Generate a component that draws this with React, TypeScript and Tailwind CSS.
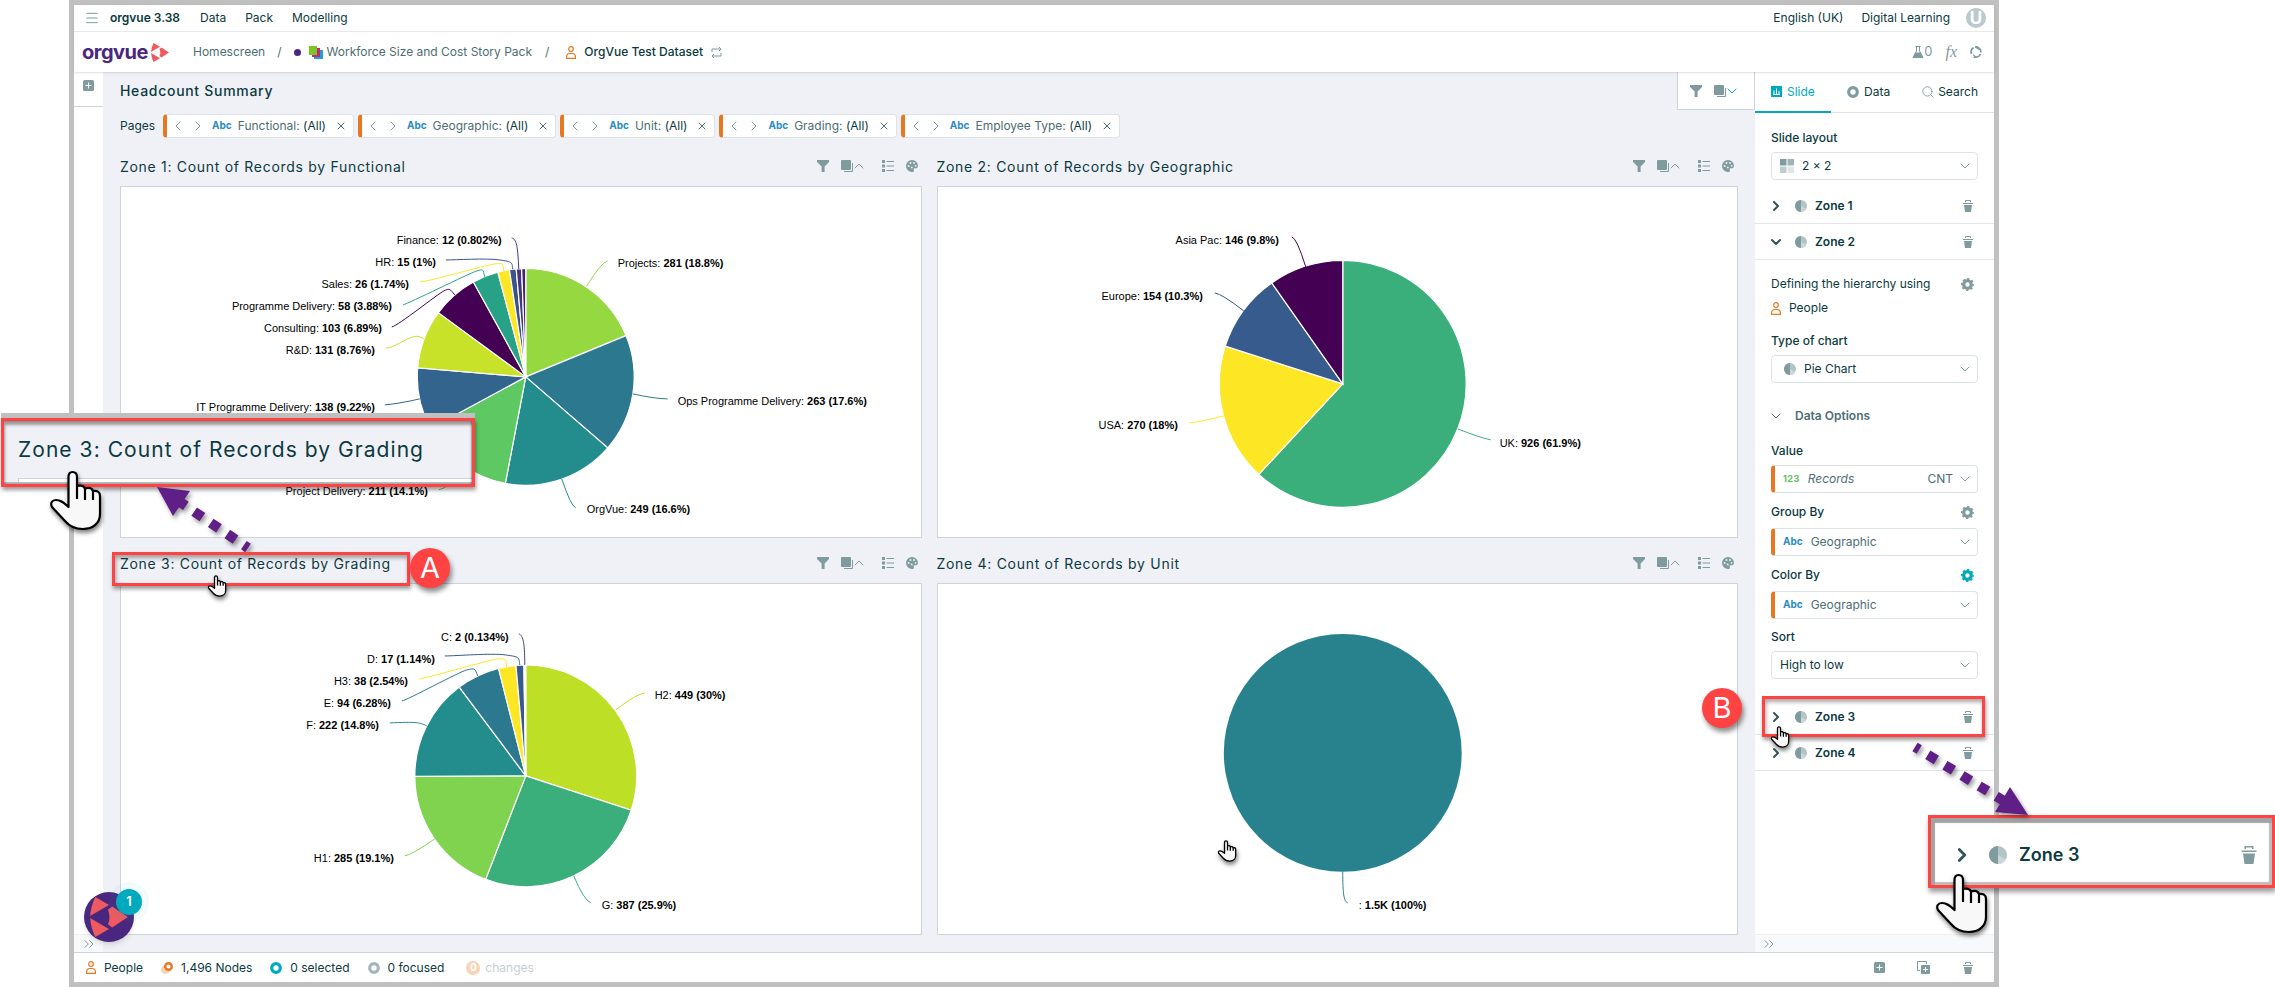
import type { ReactNode } from "react";
import { ChevronDown, ChevronLeft, ChevronRight, ChevronUp, ChevronsRight, Menu, Search, X } from "lucide-react";

type Slice = {
  name: string;
  value: number;
  text?: string;
  color: string;
  label?: [number, number];
  side?: "start" | "end";
  line?: string;
};

type Zone = { id: number; title: string; cx: number; cy: number; r: number; slices: Slice[] };

const zones: Zone[] = [
  {
    id: 1, title: "Zone 1: Count of Records by Functional", cx: 405, cy: 190, r: 108.5,
    slices: [
      { name: "Projects", value: 281, text: "281 (18.8%)", color: "#95d840", label: [92, -110], side: "start", line: "M61,-91 Q76,-115 82,-116" },
      { name: "Ops Programme Delivery", value: 263, text: "263 (17.6%)", color: "#2c788f", label: [152, 28], side: "start", line: "M107,17 Q130,22 142,22" },
      { name: "OrgVue", value: 249, text: "249 (16.6%)", color: "#238c8c", label: [61, 136], side: "start", line: "M36,102 Q45,129 50,131" },
      { name: "Project Delivery", value: 211, text: "211 (14.1%)", color: "#5ec962", label: [-98, 118], side: "end", line: "M-60,90 Q-78,112 -87,113" },
      { name: "IT Programme Delivery", value: 138, text: "138 (9.22%)", color: "#32648e", label: [-151, 34], side: "end", line: "M-106,22 Q-128,27 -141,28" },
      { name: "R&D", value: 131, text: "131 (8.76%)", color: "#c8e129", label: [-151, -23], side: "end", line: "M-102,-38 C-108,-42 -111,-41 -118,-38 S-135,-28 -140,-29" },
      { name: "Consulting", value: 103, text: "103 (6.89%)", color: "#440053", label: [-144, -45], side: "end", line: "M-71,-82 C-76,-88 -76,-89 -82,-86 S-128,-51 -134,-50" },
      { name: "Programme Delivery", value: 58, text: "58 (3.88%)", color: "#27a287", label: [-134, -67], side: "end", line: "M-41,-100 C-43,-108 -42,-108 -49,-106 S-118,-73 -123,-72" },
      { name: "Sales", value: 26, text: "26 (1.74%)", color: "#fde725", label: [-117, -89], side: "end", line: "M-22,-106 C-23,-114 -22,-114 -31,-113 S-98,-95 -106,-95" },
      { name: "HR", value: 15, text: "15 (1%)", color: "#3a538b", label: [-90, -111], side: "end", line: "M-13,-108 C-14,-115 -13,-115 -26,-117 S-70,-117 -80,-117" },
      { name: "Finance", value: 12, text: "12 (0.802%)", color: "#463480", label: [-24, -133], side: "end", line: "M-7,-108 C-8,-130 -9,-138 -14,-139" },
      { name: "Blank", value: 9, color: "#481f70" },
    ],
  },
  {
    id: 2, title: "Zone 2: Count of Records by Geographic", cx: 405, cy: 197, r: 123.5,
    slices: [
      { name: "UK", value: 926, text: "926 (61.9%)", color: "#3aae7b", label: [157, 63], side: "start", line: "M115,45 Q138,54 148,56" },
      { name: "USA", value: 270, text: "270 (18%)", color: "#fde725", label: [-165, 45], side: "end", line: "M-119,32 Q-142,38 -153,39" },
      { name: "Europe", value: 154, text: "154 (10.3%)", color: "#375b8d", label: [-140, -84], side: "end", line: "M-99,-73 Q-121,-90 -128,-91" },
      { name: "Asia Pac", value: 146, text: "146 (9.8%)", color: "#440053", label: [-64, -140], side: "end", line: "M-37,-117 Q-46,-146 -51,-147" },
    ],
  },
  {
    id: 3, title: "Zone 3: Count of Records by Grading", cx: 405, cy: 192, r: 111,
    slices: [
      { name: "H2", value: 449, text: "449 (30%)", color: "#bddf26", label: [129, -77], side: "start", line: "M90,-66 Q111,-82 119,-83" },
      { name: "G", value: 387, text: "387 (25.9%)", color: "#3aae7b", label: [76, 133], side: "start", line: "M48,100 Q58,124 65,127" },
      { name: "H1", value: 285, text: "285 (19.1%)", color: "#7fd34e", label: [-132, 86], side: "end", line: "M-91,63 Q-114,79 -121,80" },
      { name: "F", value: 222, text: "222 (14.8%)", color: "#238c8c", label: [-147, -47], side: "end", line: "M-99,-50 C-107,-54 -110,-54 -136,-53" },
      { name: "E", value: 94, text: "94 (6.28%)", color: "#2c788f", label: [-135, -69], side: "end", line: "M-48,-100 C-51,-108 -51,-108 -59,-106 S-118,-76 -124,-75" },
      { name: "H3", value: 38, text: "38 (2.54%)", color: "#fde725", label: [-118, -91], side: "end", line: "M-19,-109 C-20,-117 -19,-118 -28,-117 S-98,-98 -107,-97" },
      { name: "D", value: 17, text: "17 (1.14%)", color: "#38598c", label: [-91, -113], side: "end", line: "M-6,-111 C-7,-119 -6,-119 -20,-121 S-70,-120 -81,-120" },
      { name: "C", value: 2, text: "2 (0.134%)", color: "#404387", label: [-17, -135], side: "end", line: "M-1,-111 C-1,-130 -2,-141 -7,-142" },
      { name: "Blank", value: 2, color: "#ffffff" },
    ],
  },
  {
    id: 4, title: "Zone 4: Count of Records by Unit", cx: 405, cy: 169, r: 119,
    slices: [
      { name: "", value: 1496, text: "1.5K (100%)", color: "#27828e", label: [16, 156], side: "start", line: "M0,119 C0,140 1,149 5,150" },
    ],
  },
];

const pages = ["Functional", "Geographic", "Unit", "Grading", "Employee Type"];

function Pie({ zone }: { zone: Zone }) {
  const total = zone.slices.reduce((sum, s) => sum + s.value, 0);
  const r = zone.r;
  let sum = 0;
  const point = (v: number) => {
    const a = (v / total) * Math.PI * 2;
    return `${(Math.sin(a) * r).toFixed(2)},${(-Math.cos(a) * r).toFixed(2)}`;
  };
  return (
    <svg viewBox="0 0 800 350" className="block w-full h-auto" role="img" aria-label={zone.title}>
      <g transform={`translate(${zone.cx} ${zone.cy})`}>
        {zone.slices.map(s => {
          const from = sum;
          sum += s.value;
          if (s.value === total) return <circle key={s.name} r={r} fill={s.color} />;
          return (
            <path
              key={s.name}
              d={`M0,0 L${point(from)} A${r},${r} 0 ${s.value > total / 2 ? 1 : 0} 1 ${point(sum)} Z`}
              fill={s.color}
              stroke="#fff"
              strokeWidth="1.2"
            />
          );
        })}
        {zone.slices.filter(s => s.label).map(s => (
          <g key={s.name}>
            <path d={s.line} fill="none" stroke={s.color} />
            <text x={s.label![0]} y={s.label![1]} textAnchor={s.side} className="text-[11px] fill-black font-['Liberation_Sans',Arial,sans-serif]">
              {s.name}: <tspan className="font-bold">{s.text}</tspan>
            </text>
          </g>
        ))}
      </g>
    </svg>
  );
}

const Funnel = () => (
  <svg width="12" height="12" viewBox="0 0 12 12" fill="#7f9b9e"><path d="M0 0h12v2L7.6 6.5V12H4.6V6.5L0 2z" /></svg>
);

const Layers = () => (
  <svg width="12" height="12" viewBox="0 0 12 12">
    <rect width="10" height="10" rx="1" fill="#7f9b9e" />
    <path d="M11.5 3v8.5H3" fill="none" stroke="#7f9b9e" />
  </svg>
);

const ListIcon = () => (
  <svg width="12" height="12" viewBox="0 0 12 12">
    <path d="M0 0h3v3H0zM0 4.5h3v3H0zM0 9h3v3H0z" fill="#7f9b9e" />
    <path d="M4.5 1.5H12M4.5 6H12M4.5 10.5H12" stroke="#7f9b9e" />
  </svg>
);

const Palette = () => (
  <svg width="12" height="12" viewBox="0 0 12 12">
    <path d="M6 0a6 6 0 0 1 6 6c0 2-1.600 2.400-3 2.200-1.400-.2-1.500.8-1.200 1.700C8.200 11.300 7.500 12 6 12A6 6 0 0 1 6 0z" fill="#7f9b9e" />
    <g fill="#f0f1f6"><circle cx="2.600" cy="6" r="1" /><circle cx="4.500" cy="3" r="1" /><circle cx="8" cy="3" r="1" /><circle cx="9.700" cy="5.800" r=".9" /><circle cx="5.800" cy="7.500" r=".9" /></g>
  </svg>
);

const PieIcon = ({ size = 12 }: { size?: number }) => (
  <svg width={size} height={size} viewBox="0 0 12 12">
    <circle cx="6" cy="6" r="6" fill="#b3c4c6" />
    <path d="M6 6l5.200 3A6 6 0 0 1 6 12z" fill="#ccd7d8" />
    <path d="M6 0v12A6 6 0 0 1 6 0z" fill="#7f9b9e" />
  </svg>
);

const Trash = ({ size = 12 }: { size?: number }) => (
  <svg width={size} height={size} viewBox="0 0 12 12">
    <path d="M3.500 2V.5h5V2M1 3.500h10" fill="none" stroke="#7f9b9e" />
    <path d="M2 5h8l-1 7H3z" fill="#7f9b9e" />
  </svg>
);

const Person = () => (
  <svg width="10" height="13" viewBox="0 0 10 13" fill="none" stroke="#e87722" strokeWidth="1.200">
    <circle cx="5" cy="3" r="2.300" />
    <path d="M.6 12.400V11c0-2 1.500-3.500 3.400-3.500h2c1.900 0 3.400 1.500 3.400 3.500v1.400z" />
  </svg>
);

const PlusBox = () => (
  <svg width="11" height="11" viewBox="0 0 11 11">
    <rect width="11" height="11" rx="1.500" fill="#7f9b9e" />
    <path d="M5.500 2.500v6M2.500 5.500h6" stroke="#fff" />
  </svg>
);

const Gear = ({ color = "#7f9b9e" }: { color?: string }) => (
  <svg width="13" height="13" viewBox="0 0 13 13" fill="none" stroke={color}>
    <circle cx="6.500" cy="6.500" r="3.800" strokeWidth="3.200" />
    <circle cx="6.500" cy="6.500" r="5.600" strokeWidth="1.800" strokeDasharray="2.200 2.200" strokeDashoffset="1.100" />
  </svg>
);

const Ring = ({ color }: { color: string }) => (
  <svg width="12" height="12" viewBox="0 0 12 12"><circle cx="6" cy="6" r="4.300" fill="none" stroke={color} strokeWidth="3.200" /></svg>
);

const Hand = ({ className, stroke = 2.2 }: { className: string; stroke?: number }) => (
  <svg viewBox="0 0 51 59" className={`absolute overflow-visible drop-shadow-[1px_3px_2px_rgba(0,0,0,0.5)] ${className}`} fill="#f8f8f8" stroke="#000" strokeWidth={stroke} strokeLinejoin="round">
    <path d="M18.500 36V6c0-3 1-5 4-5s4.500 2 4.500 5v9c4-1 7 0 8 2.500 4-1.200 7 0 8 2.500 4-.8 7 .8 7 5v18c0 9-7 15-17 15-8 0-13-2-18-8L2 36c-2-4 0-7 4-7 5 0 8 3 12.500 7z" />
    <path d="M27 15v13M35 17.500V29M43 20v9" fill="none" />
  </svg>
);

const Mark = ({ className }: { className: string }) => (
  <svg viewBox="0 0 36 38" className={className} fill="#ee5a5f">
    <path d="M5 0l13 7.500L0 18Q1 8 5 0z" />
    <path d="M0 20l18 10.500L5 38Q1 30 0 20z" />
    <path d="M17 12l4-3 15 10-15 10-4-3q3-7 0-14z" />
  </svg>
);

function Field({ label, value, icon, suffix, accent, italic, muted }: {
  label: string; value: string; icon?: ReactNode; suffix?: string; accent?: boolean; italic?: boolean; muted?: boolean;
}) {
  return (
    <div className={`flex items-center h-7 pl-2 pr-1 bg-white border border-[#dde3e5] rounded-sm ${accent ? "border-l-4 border-l-[#e87722]" : ""}`}>
      {icon && <span className="flex mr-2">{icon}</span>}
      <select
        aria-label={label}
        className={`flex-1 min-w-0 appearance-none bg-transparent outline-none ${italic ? "italic" : ""} ${muted ? "text-[#4d6e73]" : ""}`}
      >
        <option>{value}</option>
      </select>
      {suffix && <span className="mr-1 text-[#4d6e73]">{suffix}</span>}
      <ChevronDown size={16} strokeWidth={1.5} color="#7f9b9e" />
    </div>
  );
}

const Abc = () => <span className="text-[10px] font-bold text-[#2b8cc4]">Abc</span>;

function ZoneRow({ id, open }: { id: number; open?: boolean }) {
  const Arrow = open ? ChevronDown : ChevronRight;
  return (
    <div className="flex items-center h-9 pl-[13px] pr-5 border-b border-[#e2e6e8]">
      <button className="flex flex-1 items-center font-semibold" aria-expanded={!!open}>
        <Arrow size={16} strokeWidth={3} color="#2f5459" />
        <span className="ml-[11px] mr-2"><PieIcon /></span>
        Zone {id}
      </button>
      <button aria-label={`Delete zone ${id}`}><Trash /></button>
    </div>
  );
}

function ZonePanel({ zone }: { zone: Zone }) {
  return (
    <section>
      <div className="flex items-center h-[45px] pt-[5px] pr-1">
        <h2 className="flex-1 pt-[2px] text-sm tracking-wider">{zone.title}</h2>
        <div className="flex items-center text-[#7f9b9e]">
          <button aria-label="Filter" className="mr-3"><Funnel /></button>
          <button aria-label="Layers" className="flex items-center mr-[15px]"><Layers /><ChevronUp size={16} strokeWidth={1.5} className="-ml-[2px]" /></button>
          <button aria-label="List" className="mr-3"><ListIcon /></button>
          <button aria-label="Colours"><Palette /></button>
        </div>
      </div>
      <div className="bg-white border border-[#ccd5d9]">
        <Pie zone={zone} />
      </div>
    </section>
  );
}

function Sidebar() {
  return (
    <aside className="flex flex-col w-[239px] shrink-0 bg-white">
      <nav className="flex h-[41px] border-b border-[#dde3e5]">
        <button className="flex items-center gap-[5px] w-[76px] pl-4 -mb-px border-b-2 border-[#00a9bd] text-[#00a9bd]">
          <svg width="11" height="11" viewBox="0 0 11 11"><path fill="#00a9bd" d="M0 0h11v11H0z" /><path d="M3 4.500v4M5.500 2.500v6M8 5v3.500M2 8.500h7" stroke="#fff" /></svg>
          Slide
        </button>
        <button className="flex items-center gap-[5px] ml-4"><Ring color="#7f9b9e" />Data</button>
        <button className="flex items-center gap-[3px] ml-auto mr-4"><Search size={14} strokeWidth={1.5} color="#7f9b9e" />Search</button>
      </nav>

      <div className="px-4 pt-[15px] mb-2">
        <h3 className="mb-1 leading-5 font-medium">Slide layout</h3>
        <Field
          label="Slide layout"
          value="2 × 2"
          icon={
            <svg width="14" height="14" viewBox="0 0 14 14"><path d="M0 0h6.500v6.500H0z" fill="#7f9b9e" /><path d="M7.500 0H14v6.500H7.500z" fill="#9fb4b6" /><path d="M0 7.500h6.500V14H0z" fill="#bfcdce" /><path d="M7.500 7.500H14V14H7.500z" fill="#dfe6e6" /></svg>
          }
        />
      </div>

      <ZoneRow id={1} />
      <ZoneRow id={2} open />

      <div className="px-4 pt-[14px] mb-5">
        <div className="flex items-center justify-between pr-1 leading-5">Defining the hierarchy using<button aria-label="Hierarchy settings"><Gear /></button></div>
        <div className="flex items-center gap-2 mt-1 leading-5"><Person />People</div>
        <h3 className="mt-[13px] mb-1 leading-5 font-medium">Type of chart</h3>
        <Field label="Type of chart" value="Pie Chart" icon={<span className="ml-1"><PieIcon /></span>} />

        <button className="flex items-center gap-[11px] mt-[23px] -ml-[3px] leading-5 font-semibold text-[#4d6e73]">
          <ChevronDown size={16} strokeWidth={1.5} />Data Options
        </button>
        <h3 className="mt-[15px] mb-1 leading-5 font-medium">Value</h3>
        <Field label="Value" value="Records" suffix="CNT" accent italic muted icon={<span className="text-[9px] font-bold tracking-wider text-[#5bbf5b]">123</span>} />
        <div className="flex items-center justify-between mt-[9px] mb-[6px] pr-1 leading-5 font-medium">Group By<button aria-label="Group by settings"><Gear /></button></div>
        <Field label="Group By" value="Geographic" accent muted icon={<Abc />} />
        <div className="flex items-center justify-between mt-[9px] mb-[6px] pr-1 leading-5 font-medium">Color By<button aria-label="Color by settings"><Gear color="#00a9bd" /></button></div>
        <Field label="Color By" value="Geographic" accent muted icon={<Abc />} />
        <h3 className="mt-2 mb-1 leading-5 font-medium">Sort</h3>
        <Field label="Sort" value="High to low" />
      </div>

      <ZoneRow id={3} />
      <ZoneRow id={4} />

      <div className="flex items-center mt-auto h-[18px] pl-[6px] bg-[#f8f9fb] border-t border-[#eceff1]">
        <button aria-label="Collapse panel"><ChevronsRight size={16} strokeWidth={1.5} color="#7f9b9e" /></button>
      </div>
    </aside>
  );
}

function Header() {
  return (
    <header className="relative bg-white shadow-sm">
      <div className="flex items-center h-[27px] pl-[10px] pr-2 border-b border-[#e6e9eb]">
        <button aria-label="Menu"><Menu size={16} strokeWidth={1.5} color="#7f9b9e" /></button>
        <span className="ml-[10px] mr-5 font-semibold">orgvue 3.38</span>
        <nav className="flex flex-1 gap-[19px]">
          <a href="#data">Data</a>
          <a href="#pack">Pack</a>
          <a href="#modelling">Modelling</a>
        </nav>
        <span className="mr-[18px]">English (UK)</span>
        <span className="mr-4">Digital Learning</span>
        <span className="flex items-center justify-center size-5 rounded-full bg-[#bcc8d0] text-white text-[17px] font-bold">U</span>
      </div>
      <div className="flex items-center h-10 pl-2 pr-3">
        <a href="#home" className="flex items-center gap-[3px] w-[111px] text-[20px] leading-6 font-bold tracking-tight text-[#4a277f]">
          orgvue<Mark className="w-[18px] h-[19px]" />
        </a>
        <a href="#homescreen" className="text-[#4d6e73]">Homescreen</a>
        <span className="mx-3 text-[#4d6e73]">/</span>
        <span className="size-[7px] rounded-full bg-[#4a277f] mr-2" />
        <svg width="14" height="13" viewBox="0 0 14 13" className="mr-1"><path d="M5 4h9v9H5z" fill="#1a9fe0" /><path d="M3 2h8v9H3z" fill="#c2286c" /><path d="M0 0h8v9H0z" fill="#7cc623" /></svg>
        <a href="#pack" className="text-[#4d6e73]">Workforce Size and Cost Story Pack</a>
        <span className="ml-[13px] mr-[17px] text-[#4d6e73]">/</span>
        <Person />
        <span className="ml-2 mr-2 font-medium">OrgVue Test Dataset</span>
        <svg width="11" height="11" viewBox="0 0 11 11" fill="none" stroke="#7f9b9e"><path d="M1 5V2h8.500M8 0l2 2-2 2M10 6v3H1.500M3 7L1 9l2 2" /></svg>
        <span className="flex items-center ml-auto text-[13px] text-[#7f9b9e]">
          <svg width="12" height="12" viewBox="0 0 12 12"><path d="M3.500 .5h5M4.500.5V5L1 11.500h10L7.500 5V.5" fill="none" stroke="#7f9b9e" /><path d="M3.500 6.500h5l2.500 5H1z" fill="#7f9b9e" /></svg>
          0
        </span>
        <span className="mx-[13px] text-[16px] italic text-[#7f9b9e] font-['Liberation_Serif',serif]">fx</span>
        <svg width="12" height="12" viewBox="0 0 12 12" fill="none" stroke="#7f9b9e" strokeWidth="1.800"><path d="M10.500 8A5 5 0 0 1 4 10.600M1.500 8A5 5 0 0 1 3.600 1.600M5 1.200a5 5 0 0 1 5.900 5.300" /><path d="M3 8.600L5.600 10.800 3.400 12M9 3.500L6 1.200 8 0" strokeWidth="1.200" /></svg>
      </div>
    </header>
  );
}

function Footer() {
  return (
    <footer className="flex items-center h-[30px] pl-3 pr-5 bg-white border-t border-[#ccd5d9]">
      <span className="flex items-center gap-2 mr-[18px]"><Person />People</span>
      <span className="flex items-center gap-2 mr-[18px]">
        <svg width="12" height="12" viewBox="0 0 12 12"><circle cx="4.500" cy="7.500" r="4.500" fill="#f9d3b8" /><circle cx="7.500" cy="4.500" r="3.300" fill="#fff" stroke="#e87722" strokeWidth="2.400" /></svg>
        1,496 Nodes
      </span>
      <span className="flex items-center gap-2 mr-[18px]"><Ring color="#00a9bd" />0 selected</span>
      <span className="flex items-center gap-2 mr-[22px]"><Ring color="#a3b5bf" />0 focused</span>
      <span className="flex items-center gap-[5px] text-[#c5cfd2]">
        <span className="flex items-center justify-center size-[14px] rounded-full bg-[#f9d3b8] text-white text-[10px] font-bold">0</span>
        changes
      </span>
      <span className="flex items-center gap-8 ml-auto">
        <button aria-label="Add"><PlusBox /></button>
        <button aria-label="Duplicate">
          <svg width="13" height="13" viewBox="0 0 13 13"><path d="M3 9.500H.5V.5h9V3" fill="none" stroke="#7f9b9e" /><rect x="4" y="4" width="9" height="9" rx="1" fill="#7f9b9e" /><path d="M8.500 6v5M6 8.500h5" stroke="#fff" /></svg>
        </button>
        <button aria-label="Delete"><Trash /></button>
      </span>
    </footer>
  );
}

// Callouts, arrows and pointers drawn on top of the screen
function Annotations() {
  const shadow = "drop-shadow-[2px_3px_2px_rgba(0,0,0,0.4)]";
  return (
    <>
      <div className="absolute left-[1px] top-[413px] w-[474px] h-[5px] bg-[#c0c0c0]" />
      <div className="absolute left-[1px] top-[418px] w-[474px] h-[69px] flex flex-col bg-[#f0f1f6] border-[3px] border-[#ff4343] shadow-[1px_3px_4px_rgba(0,0,0,0.4)]">
        <p className="pl-[14px] pt-[13px] flex-1 text-[21px] leading-8 tracking-wider">Zone 3: Count of Records by Grading</p>
        <div className="h-1 ml-[14px] bg-white border-t border-l border-[#ccd5d9]" />
        <div className="h-[2px] bg-[#bdbdbd]" />
        <div className="absolute inset-0 shadow-[inset_1px_4px_3px_rgba(0,0,0,0.35),inset_-1px_0_2px_rgba(0,0,0,0.35)]" />
      </div>
      <Hand className="left-[50px] top-[471px] w-[51px] h-[59px]" />

      <svg className={`absolute left-[150px] top-[480px] ${shadow}`} width="110" height="80" viewBox="150 480 110 80">
        <path d="M248,548L180,502" stroke="#5f1f87" strokeWidth="10" strokeDasharray="10 10" strokeDashoffset="5" />
        <path d="M157,487L190,491L173,516Z" fill="#5f1f87" />
      </svg>

      <div className="absolute left-[112px] top-[552px] w-[298px] h-[34px] border-[3px] border-[#ff4343] shadow-[1px_3px_4px_rgba(0,0,0,0.4),inset_1px_3px_4px_rgba(0,0,0,0.35)]" />
      <div className="absolute left-[410px] top-[548px] size-10 flex items-center justify-center rounded-full bg-[#ff4343] text-white text-[29px] shadow-[2px_4px_5px_rgba(0,0,0,0.45)]">A</div>
      <Hand stroke={3.6} className="left-[208px] top-[575px] w-[18px] h-[22px]" />
      <Hand stroke={3.6} className="left-[1218px] top-[840px] w-[18px] h-[22px]" />

      <div className="absolute right-[533px] top-[688px] size-10 flex items-center justify-center rounded-full bg-[#ff4343] text-white text-[29px] shadow-[2px_4px_5px_rgba(0,0,0,0.45)]">B</div>
      <div className="absolute right-[290px] top-[696px] w-[223px] h-[41px] border-[3px] border-[#ff4343] shadow-[1px_3px_4px_rgba(0,0,0,0.4),inset_1px_3px_4px_rgba(0,0,0,0.35)]" />
      <Hand stroke={3.6} className="right-[486px] top-[726px] w-[18px] h-[22px]" />

      <div className="absolute right-0 top-[815px] w-[347px] h-[73px] flex items-center pl-5 pr-[14px] pb-[2px] pt-2 bg-white border-[3px] border-[#ff4343] text-[18px] font-semibold shadow-[1px_4px_5px_rgba(0,0,0,0.4),inset_4px_5px_1px_#a3a3a3,inset_-3px_-3px_1px_#bdbdbd]">
        <ChevronRight size={22} strokeWidth={3} color="#2f5459" />
        <span className="ml-4 mr-3"><PieIcon size={18} /></span>
        <span className="flex-1">Zone 3</span>
        <Trash size={18} />
      </div>
      <svg className={`absolute right-[235px] top-[735px] ${shadow}`} width="130" height="90" viewBox="1910 735 130 90">
        <path d="M1915,747L2004,801" stroke="#5f1f87" strokeWidth="10" strokeDasharray="10 10" strokeDashoffset="5" />
        <path d="M2028,815L2010,787L1995,812Z" fill="#5f1f87" />
      </svg>
      <Hand className="right-[288px] top-[874px] w-[51px] h-[59px]" />

      <button aria-label="Help, 1 notification" className="absolute left-[84px] top-[892px] size-[50px] flex items-center justify-center rounded-full bg-[#4a277f] shadow-md">
        <Mark className="w-[38px] h-10" />
        <span className="absolute left-[32px] -top-[3px] size-[26px] flex items-center justify-center rounded-full bg-[#00a9bd] text-white text-[13px] font-semibold ring-[7px] ring-[#00a9bd]/5">1</span>
      </button>
    </>
  );
}

export default function App() {
  return (
    <div className="relative min-h-screen flex pl-[69px] pr-[276px] bg-white text-xs text-[#0b3a40] font-[Inter,sans-serif]">
      <div className="flex flex-col flex-1 min-w-0 border-[5px] border-[#c0c0c0]">
        <Header />
        <div className="flex flex-1">
          <div className="flex flex-col w-[29px] shrink-0 bg-white">
            <button aria-label="Add slide" className="flex justify-center h-[35px] pt-2 border-b border-[#ccd5d9]"><PlusBox /></button>
            <button aria-label="Expand panel" className="flex items-center mt-auto h-[18px] pl-[7px] bg-[#f8f9fb] border-t border-[#eceff1]">
              <ChevronsRight size={16} strokeWidth={1.5} color="#7f9b9e" />
            </button>
          </div>

          <main className="flex-1 min-w-0 bg-[#f0f1f6]">
            <div className="flex items-start justify-between pl-[17px]">
              <h1 className="text-sm leading-[38px] font-medium tracking-wider">Headcount Summary</h1>
              <div className="flex items-center w-[78px] h-[38px] pl-3 bg-white border-l border-b border-r border-[#ccd5d9]">
                <button aria-label="Filter slide" className="mr-3"><Funnel /></button>
                <button aria-label="Slide layers" className="flex items-center text-[#00a9bd]"><Layers /><ChevronDown size={16} strokeWidth={1.5} className="-ml-[2px]" /></button>
              </div>
            </div>

            <div className="flex items-center gap-1 h-6 mt-1 pl-[17px]">
              <span className="mr-1">Pages</span>
              {pages.map(p => (
                <div key={p} className="flex items-center h-6 pl-[3px] pr-[6px] bg-white border border-l-4 border-[#dde3e5] border-l-[#e87722] rounded-sm">
                  <button aria-label={`Previous ${p}`}><ChevronLeft size={16} strokeWidth={1.5} color="#7f9b9e" /></button>
                  <button aria-label={`Next ${p}`} className="ml-1 mr-[6px]"><ChevronRight size={16} strokeWidth={1.5} color="#7f9b9e" /></button>
                  <Abc />
                  <span className="ml-[6px] mr-[9px]"><span className="text-[#4d6e73]">{p}:</span> (All)</span>
                  <button aria-label={`Remove ${p}`}><X size={12} strokeWidth={2} color="#4d6e73" /></button>
                </div>
              ))}
            </div>

            <div className="grid grid-cols-2 gap-x-[15px] mt-[3px] px-[17px]">
              {zones.map(z => <ZonePanel key={z.id} zone={z} />)}
            </div>
          </main>

          <Sidebar />
        </div>
        <Footer />
      </div>
      <Annotations />
    </div>
  );
}
